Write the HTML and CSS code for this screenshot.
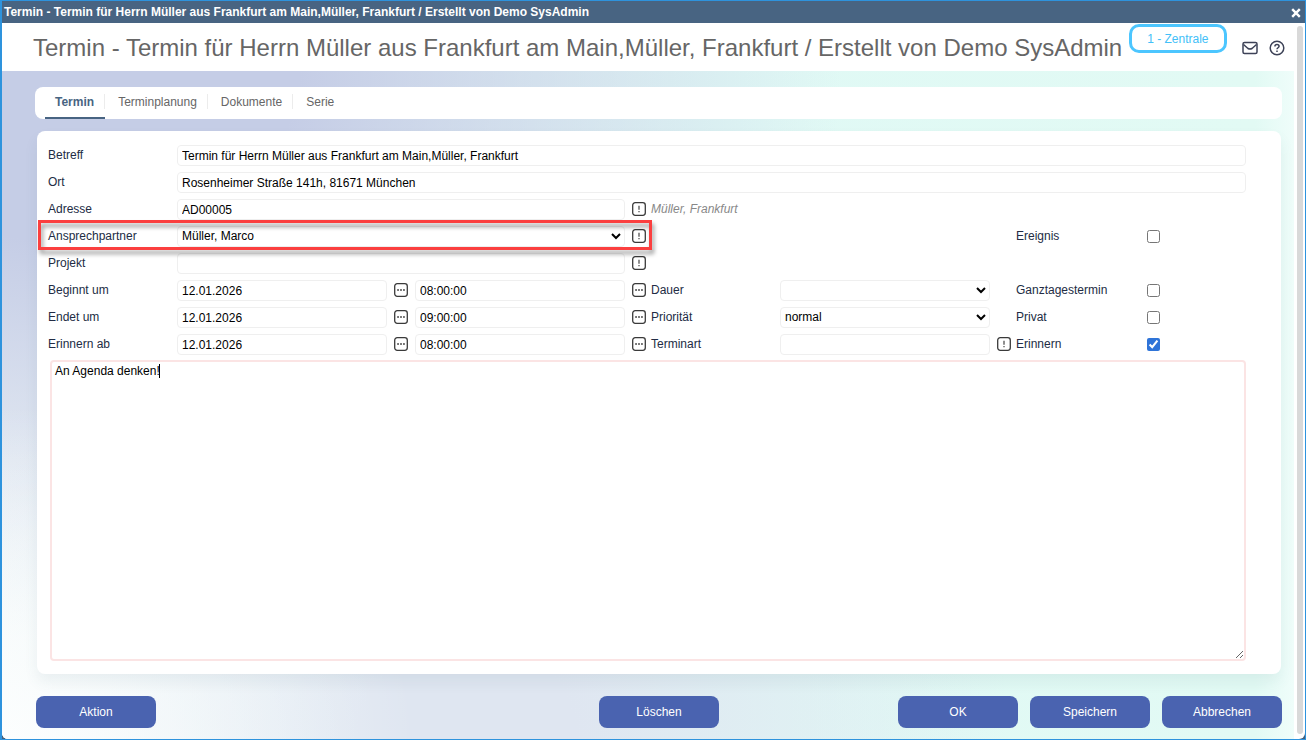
FILE: index.html
```html
<!DOCTYPE html>
<html lang="de">
<head>
    <meta charset="UTF-8">
    <meta name="viewport" content="width=device-width, initial-scale=1.0">
    <title>Termin</title>
    <link rel="stylesheet" href="styles.css">
</head>
<body>
    <svg class="symbols" aria-hidden="true">
        <symbol id="icon-info" viewBox="0 0 14 14">
            <rect x="0.700" y="0.700" width="12.600" height="12.600" rx="2.500" fill="none" stroke="#3a3a3a" stroke-width="1.300"/>
            <path d="M7 3.800v4M7 9v1.300" stroke="#444" stroke-width="1.200"/>
        </symbol>
        <symbol id="icon-dots" viewBox="0 0 14 14">
            <rect x="0.700" y="0.700" width="12.600" height="12.600" rx="2.500" fill="none" stroke="#3a3a3a" stroke-width="1.300"/>
            <path d="M3.200 7h1.700M6.150 7h1.700M9.100 7h1.700" stroke="#333" stroke-width="1.400"/>
        </symbol>
    </svg>

    <div class="window">
        <div class="titlebar">
            <span>Termin - Termin für Herrn Müller aus Frankfurt am Main,Müller, Frankfurt / Erstellt von Demo SysAdmin</span>
            <button class="close-btn" aria-label="Schließen">
                <svg width="10" height="10" viewBox="0 0 10 10"><path d="M1.200 1.200l7.600 7.600M8.800 1.200l-7.600 7.600" stroke="#fff" stroke-width="2.400"/></svg>
            </button>
        </div>

        <div class="scroll-area">
            <div class="page">
                <header class="header">
                    <h1>Termin - Termin für Herrn Müller aus Frankfurt am Main,Müller, Frankfurt / Erstellt von Demo SysAdmin</h1>
                    <button class="branch">1 - Zentrale</button>
                    <div class="header-icons">
                        <button class="icon-btn" aria-label="E-Mail">
                            <svg width="16" height="16" viewBox="0 0 16 16" fill="none" stroke="#3d4257" stroke-width="1.5" stroke-linejoin="round"><rect x="1" y="2.500" width="14" height="11" rx="1.500"/><path d="M1.500 4.500l4.500 4q2 1.200 4 0l4.500-4"/></svg>
                        </button>
                        <button class="icon-btn" aria-label="Hilfe">
                            <svg width="16" height="16" viewBox="0 0 16 16" fill="none" stroke="#3d4257" stroke-width="1.5"><circle cx="8" cy="8" r="6.800"/><path d="M5.900 6.400c0-1.300 1-2 2.100-2s2.100.7 2.100 1.900c0 1.400-2.100 1.500-2.100 3"/><path d="M8 10.500v1.500"/></svg>
                        </button>
                    </div>
                </header>

                <main class="content">
                    <nav class="tabs">
                        <a class="tab active" href="#termin">Termin</a>
                        <a class="tab" href="#terminplanung">Terminplanung</a>
                        <a class="tab" href="#dokumente">Dokumente</a>
                        <a class="tab" href="#serie">Serie</a>
                    </nav>

                    <form class="panel" id="termin">
                        <div class="fields">
                            <label class="c-label row-1" for="betreff">Betreff</label>
                            <input class="c-full row-1" id="betreff" type="text" value="Termin für Herrn Müller aus Frankfurt am Main,Müller, Frankfurt">

                            <label class="c-label row-2" for="ort">Ort</label>
                            <input class="c-full row-2" id="ort" type="text" value="Rosenheimer Straße 141h, 81671 München">

                            <label class="c-label row-3" for="adresse">Adresse</label>
                            <input class="c-wide row-3" id="adresse" type="text" value="AD00005">
                            <button class="pick c-pick2 row-3" type="button" aria-label="Adresse wählen"><svg><use href="#icon-info"/></svg></button>
                            <span class="hint c-label2 row-3">Müller, Frankfurt</span>

                            <label class="c-label row-4" for="partner">Ansprechpartner</label>
                            <select class="c-wide row-4" id="partner"><option>Müller, Marco</option></select>
                            <button class="pick c-pick2 row-4" type="button" aria-label="Ansprechpartner öffnen"><svg><use href="#icon-info"/></svg></button>
                            <label class="c-label3 row-4" for="ereignis">Ereignis</label>
                            <input class="c-check row-4" id="ereignis" type="checkbox">

                            <label class="c-label row-5" for="projekt">Projekt</label>
                            <input class="c-wide row-5" id="projekt" type="text">
                            <button class="pick c-pick2 row-5" type="button" aria-label="Projekt wählen"><svg><use href="#icon-info"/></svg></button>

                            <label class="c-label row-6" for="beginn">Beginnt um</label>
                            <input class="c-date row-6" id="beginn" type="text" value="12.01.2026">
                            <button class="pick c-pick1 row-6" type="button" aria-label="Datum wählen"><svg><use href="#icon-dots"/></svg></button>
                            <input class="c-time row-6" type="text" value="08:00:00" aria-label="Beginn Uhrzeit">
                            <button class="pick c-pick2 row-6" type="button" aria-label="Uhrzeit wählen"><svg><use href="#icon-dots"/></svg></button>
                            <label class="c-label2 row-6" for="dauer">Dauer</label>
                            <select class="c-extra row-6" id="dauer"><option></option></select>
                            <label class="c-label3 row-6" for="ganztag">Ganztagestermin</label>
                            <input class="c-check row-6" id="ganztag" type="checkbox">

                            <label class="c-label row-7" for="ende">Endet um</label>
                            <input class="c-date row-7" id="ende" type="text" value="12.01.2026">
                            <button class="pick c-pick1 row-7" type="button" aria-label="Datum wählen"><svg><use href="#icon-dots"/></svg></button>
                            <input class="c-time row-7" type="text" value="09:00:00" aria-label="Ende Uhrzeit">
                            <button class="pick c-pick2 row-7" type="button" aria-label="Uhrzeit wählen"><svg><use href="#icon-dots"/></svg></button>
                            <label class="c-label2 row-7" for="prio">Priorität</label>
                            <select class="c-extra row-7" id="prio"><option>normal</option></select>
                            <label class="c-label3 row-7" for="privat">Privat</label>
                            <input class="c-check row-7" id="privat" type="checkbox">

                            <label class="c-label row-8" for="erinnern-ab">Erinnern ab</label>
                            <input class="c-date row-8" id="erinnern-ab" type="text" value="12.01.2026">
                            <button class="pick c-pick1 row-8" type="button" aria-label="Datum wählen"><svg><use href="#icon-dots"/></svg></button>
                            <input class="c-time row-8" type="text" value="08:00:00" aria-label="Erinnern Uhrzeit">
                            <button class="pick c-pick2 row-8" type="button" aria-label="Uhrzeit wählen"><svg><use href="#icon-dots"/></svg></button>
                            <label class="c-label2 row-8" for="terminart">Terminart</label>
                            <input class="c-extra row-8" id="terminart" type="text">
                            <button class="pick c-pick3 row-8" type="button" aria-label="Terminart wählen"><svg><use href="#icon-info"/></svg></button>
                            <label class="c-label3 row-8" for="erinnern">Erinnern</label>
                            <input class="c-check row-8" id="erinnern" type="checkbox" checked>

                            <div class="highlight row-4"></div>
                        </div>

                        <div class="notes">
                            <textarea aria-label="Notiz">An Agenda denken!</textarea>
                            <span class="caret"></span>
                        </div>
                    </form>

                    <div class="actions">
                        <button class="btn">Aktion</button>
                        <button class="btn">Löschen</button>
                        <div class="actions-right">
                            <button class="btn">OK</button>
                            <button class="btn">Speichern</button>
                            <button class="btn">Abbrechen</button>
                        </div>
                    </div>
                </main>
            </div>
            <div class="scrollbar"><div class="thumb"></div></div>
        </div>
    </div>
</body>
</html>
```
FILE: styles.css
```css
* {
    box-sizing: border-box;
}

body {
    margin: 0;
    background: #45607c;
    font-family: "Liberation Sans", Arial, sans-serif;
    font-size: 12px;
    color: #222c44;
}

button,
input,
select,
textarea {
    font: inherit;
}

button {
    padding: 0;
    border: none;
    background: none;
    cursor: pointer;
}

.symbols {
    display: none;
}

.window {
    display: flex;
    flex-direction: column;
    min-height: 100vh;
    border: 1px solid #2e93dd;
    border-left-width: 2px;
}

.titlebar {
    display: flex;
    justify-content: space-between;
    align-items: center;
    height: 22px;
    padding: 0 4px 0 2px;
    background: #486482;
    color: #fff;
    font-weight: bold;
}

.close-btn {
    display: flex;
    padding-top: 2px;
}

.scroll-area {
    flex: 1;
    display: flex;
    background: #fff;
    border-radius: 0 0 6px 6px;
    overflow: hidden;
}

.page {
    flex: 1;
    display: flex;
    flex-direction: column;
}

.scrollbar {
    display: flex;
    width: 11px;
    padding: 3px 2px 5px 3px;
}

.thumb {
    flex: 1;
    border-radius: 3px;
    background: #d9d9d9;
}

/* Header */
.header {
    display: flex;
    align-items: center;
    height: 48px;
    padding: 2px 9px 0 31px;
}

.header h1 {
    margin: 0;
    font-size: 24px;
    font-weight: normal;
    color: #666;
    white-space: nowrap;
}

.branch {
    align-self: flex-start;
    height: 29px;
    margin: -1px 0 0 7px;
    padding: 0 15px;
    border: 3px solid #4cc6ff;
    border-radius: 10px;
    color: #42c0f8;
    white-space: nowrap;
}

.header-icons {
    display: flex;
    gap: 11px;
    margin-left: auto;
}

.icon-btn {
    display: flex;
}

/* Content */
.content {
    flex: 1;
    display: flex;
    flex-direction: column;
    padding: 16px 12px 11px 33px;
    background:
        radial-gradient(ellipse 32% 50% at 0% 100%, #fcfefe 0%, rgba(252, 254, 254, 0) 100%),
        radial-gradient(ellipse 60% 85% at 5% 0%, #c5cde6 30%, rgba(197, 213, 232, 0) 100%),
        radial-gradient(ellipse 42% 75% at 36% 100%, #dfe6f1 20%, rgba(225, 236, 243, 0) 100%),
        linear-gradient(90deg, #f4faf9 0%, #e0f9f5 55%, #e2faf4 97%, #effdfa 100%);
}

.tabs {
    display: flex;
    gap: 3px;
    height: 32px;
    padding: 0 10px;
    border-radius: 8px;
    background: #fff;
}

.tab {
    position: relative;
    padding: 0 11px 0 10px;
    line-height: 30px;
    color: #666;
    text-decoration: none;
}

.tab:not(:last-child)::after {
    content: "";
    position: absolute;
    top: 7px;
    right: 0;
    width: 1px;
    height: 15px;
    background: #ececec;
}

.tab.active {
    border-bottom: 2px solid #486482;
    color: #486482;
    font-weight: bold;
}

.panel {
    flex: 1;
    display: flex;
    flex-direction: column;
    margin: 12px 1px 0 2px;
    padding: 11px 35px 13px 11px;
    border-radius: 8px;
    background: #fff;
    box-shadow: 0 8px 14px rgba(70, 100, 120, 0.08);
}

.fields {
    display: grid;
    grid-template-columns: 129px 1fr 28px 1fr 26px 129px 1fr 26px 130px 100px;
    grid-template-rows: repeat(8, 27px);
    align-items: center;
}

.fields label,
.hint {
    padding-bottom: 2px;
}

.hint {
    color: #888;
    font-style: italic;
    white-space: nowrap;
}

.fields input[type="text"],
.fields select {
    width: 100%;
    min-width: 0;
    height: 21px;
    border: 1px solid #efefef;
    border-radius: 4px;
    background-color: #fff;
    color: #000;
}

.fields input[type="text"] {
    padding: 1px 4px 0;
}

.fields select {
    padding: 0 0 1px;
}

.fields input[type="checkbox"] {
    justify-self: start;
    margin: 1px;
    accent-color: #2f74d8;
}

.pick {
    display: flex;
    justify-content: center;
    padding-bottom: 2px;
}

.pick svg {
    width: 14px;
    height: 14px;
}

.row-1 { grid-row: 1; }
.row-2 { grid-row: 2; }
.row-3 { grid-row: 3; }
.row-4 { grid-row: 4; }
.row-5 { grid-row: 5; }
.row-6 { grid-row: 6; }
.row-7 { grid-row: 7; }
.row-8 { grid-row: 8; }

.c-label { grid-column: 1; }
.c-date { grid-column: 2; }
.c-pick1 { grid-column: 3; }
.c-time { grid-column: 4; }
.c-pick2 { grid-column: 5; }
.c-label2 { grid-column: 6; }
.c-extra { grid-column: 7; }
.c-pick3 { grid-column: 8; }
.c-label3 { grid-column: 9; }
.c-check { grid-column: 10; }
.c-wide { grid-column: 2 / 5; }
.c-full { grid-column: 2 / 11; }

.c-pick2,
.c-pick3 {
    padding-left: 2px;
}

.highlight {
    grid-column: 1 / 6;
    align-self: stretch;
    margin: -3px -1px 0 -10px;
    border: 3px solid #fb3f3f;
    filter: drop-shadow(2px 4px 2px rgba(0, 0, 0, 0.4));
    pointer-events: none;
}

/* Notes */
.notes {
    position: relative;
    flex: 1;
    display: flex;
    min-height: 120px;
    margin: 2px 0 0 2px;
}

.notes textarea {
    flex: 1;
    padding: 2px 3px;
    border: 2px solid #fbe4e4;
    border-radius: 4px;
    outline: none;
    color: #000;
    resize: both;
}

.caret {
    position: absolute;
    top: 4px;
    left: 109px;
    width: 1px;
    height: 14px;
    background: #000;
}

/* Buttons */
.actions {
    display: grid;
    grid-template-columns: 1fr 120px 1fr;
    align-items: center;
    padding: 22px 0 0 1px;
}

.btn {
    width: 120px;
    height: 32px;
    border-radius: 8px;
    background: #4a63b0;
    color: #fff;
}

.actions-right {
    display: flex;
    justify-content: flex-end;
    gap: 12px;
}
```
